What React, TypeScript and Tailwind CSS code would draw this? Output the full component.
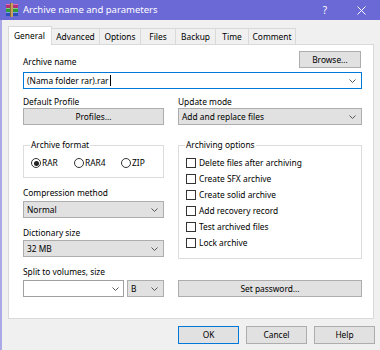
import React from "react";

function Chevron() {
  return (
    <svg width="7" height="4" viewBox="0 0 7 4" className="shrink-0">
      <polyline points="0.5,0.5 3.5,3.5 6.5,0.5" fill="none" stroke="#555" strokeWidth="1" />
    </svg>
  );
}

function Select({ value }: { value: string }) {
  return (
    <div className="h-[17px] w-full border border-[#adadad] bg-[#e1e1e1] flex items-center justify-between pl-[3px] pr-[5px]">
      <span>{value}</span>
      <Chevron />
    </div>
  );
}

function Button({ label, className = "" }: { label: string; className?: string }) {
  return (
    <div className={`h-[17px] border border-[#adadad] bg-[#e1e1e1] flex items-center justify-center ${className}`}>
      {label}
    </div>
  );
}

function Radio({ label, checked, w }: { label: string; checked?: boolean; w: string }) {
  return (
    <div className={`flex items-center gap-[1px] ${w}`}>
      <div className="w-[10px] h-[10px] rounded-full border border-[#333] bg-white flex items-center justify-center">
        {checked && <div className="w-[5px] h-[5px] rounded-full bg-[#222]" />}
      </div>
      <span>{label}</span>
    </div>
  );
}

function Check({ label }: { label: string }) {
  return (
    <div className="flex items-center h-[12px] gap-[3px]">
      <div className="w-[10px] h-[10px] border border-[#333] bg-white" />
      <span>{label}</span>
    </div>
  );
}

const tabs: { name: string; w: string }[] = [
  { name: "General", w: "w-[44px]" },
  { name: "Advanced", w: "w-[48px]" },
  { name: "Options", w: "w-[41px]" },
  { name: "Files", w: "w-[35px]" },
  { name: "Backup", w: "w-[40px]" },
  { name: "Time", w: "w-[33px]" },
  { name: "Comment", w: "w-[47px]" },
];

export default function App() {
  return (
    <div className="w-[380px] h-[350px] bg-[#f0f0f0] overflow-hidden font-['Noto_Sans',sans-serif] text-[8.4px] leading-[12px] text-black">
      {/* Title bar */}
      <div className="h-[20px] bg-[#6b69d6] flex items-center text-white">
        <svg width="14" height="14" viewBox="0 0 14 14" className="ml-[5px]">
          <rect x="1" y="1" width="12" height="4" fill="#b0307a" />
          <rect x="1" y="1" width="12" height="1" fill="#e070b0" />
          <rect x="1" y="5" width="12" height="4" fill="#2f9a3a" />
          <rect x="1" y="5" width="12" height="1" fill="#7fd07f" />
          <rect x="1" y="9" width="12" height="4" fill="#2a4fb8" />
          <rect x="1" y="9" width="12" height="1" fill="#7f9fe8" />
          <rect x="5" y="0" width="3" height="14" fill="#c8a060" />
          <rect x="5" y="0" width="1" height="14" fill="#8a6a30" />
        </svg>
        <span className="ml-[4px] text-[9.5px] leading-[20px]">Archive name and parameters</span>
        <span className="ml-auto text-[10px] leading-[20px]">?</span>
        <svg width="9" height="9" viewBox="0 0 9 9" className="ml-[30px] mr-[14px]">
          <path d="M0.5 0.5 L8.5 8.5 M8.5 0.5 L0.5 8.5" stroke="#fff" strokeWidth="1" />
        </svg>
      </div>

      <div className="h-[330px] border-l-2 border-[#aba8e8] pl-[6px] pt-[6px] flex flex-col">
        {/* Tabs */}
        <div className="flex items-end h-[18px]">
          {tabs.map((t, i) =>
            i === 0 ? (
              <div
                key={t.name}
                className={`${t.w} h-[19px] -mb-px relative z-10 bg-white border border-b-0 border-[#d9d9d9] pl-[5px] flex items-center`}
              >
                {t.name}
              </div>
            ) : (
              <div
                key={t.name}
                className={`${t.w} h-[16px] bg-[#f0f0f0] border-t border-r border-[#d9d9d9] flex items-center justify-center`}
              >
                {t.name}
              </div>
            )
          )}
        </div>

        {/* Panel */}
        <div className="w-[366px] h-[275px] bg-white border border-[#d9d9d9] pl-[14px] pt-[6px]">
          <div className="w-[339px]">
            <div className="flex items-end justify-between h-[17px]">
              <span>Archive name</span>
              <Button label="Browse..." className="w-[62px] mr-[1px]" />
            </div>
            <div className="mt-[4px] h-[17px] border border-[#0078d7] bg-white flex items-center justify-between pl-[3px] pr-[5px]">
              <div className="flex items-center">
                <span>(Nama folder rar).rar</span>
                <span className="w-px h-[11px] bg-black ml-px" />
              </div>
              <Chevron />
            </div>

            <div className="flex gap-[14px]">
              {/* Left column */}
              <div className="w-[141px] flex flex-col">
                <div className="mt-[7px]">Default Profile</div>
                <Button label="Profiles..." className="w-full" />
                <div className="mt-[20px] h-[33px] relative border border-[#dcdcdc] pt-[11px] pl-[7px]">
                  <span className="absolute -top-[7px] left-[6px] bg-white px-px">Archive format</span>
                  <div className="flex h-[12px] items-center">
                    <Radio label="RAR" checked w="w-[43px]" />
                    <Radio label="RAR4" w="w-[47px]" />
                    <Radio label="ZIP" w="w-[30px]" />
                  </div>
                </div>
                <div className="mt-[9px]">Compression method</div>
                <div className="mt-[2px]">
                  <Select value="Normal" />
                </div>
                <div className="mt-[9px]">Dictionary size</div>
                <div className="mt-[1px]">
                  <Select value="32 MB" />
                </div>
                <div className="mt-[9px]">Split to volumes, size</div>
                <div className="mt-[2px] flex gap-[3px]">
                  <div className="w-[101px] h-[17px] border border-[#a0a0a0] bg-white flex items-center justify-end pr-[4px]">
                    <Chevron />
                  </div>
                  <div className="w-[37px]">
                    <Select value="B" />
                  </div>
                </div>
              </div>

              {/* Right column */}
              <div className="w-[184px] flex flex-col">
                <div className="mt-[7px]">Update mode</div>
                <Select value="Add and replace files" />
                <div className="mt-[20px] h-[114px] relative border border-[#dcdcdc] pt-[11px] pl-[7px]">
                  <span className="absolute -top-[7px] left-[6px] bg-white px-px">Archiving options</span>
                  <div className="flex flex-col gap-[4px]">
                    <Check label="Delete files after archiving" />
                    <Check label="Create SFX archive" />
                    <Check label="Create solid archive" />
                    <Check label="Add recovery record" />
                    <Check label="Test archived files" />
                    <Check label="Lock archive" />
                  </div>
                </div>
                <Button label="Set password..." className="mt-[21px] w-full" />
              </div>
            </div>
          </div>
        </div>

        {/* Bottom buttons */}
        <div className="mt-[7px] ml-[170px] flex gap-[7px]">
          <div className="w-[61px] h-[18px] border border-[#0078d7] bg-[#e1e1e1] flex items-center justify-center">OK</div>
          <div className="w-[61px] h-[18px] border border-[#adadad] bg-[#e1e1e1] flex items-center justify-center">Cancel</div>
          <div className="w-[61px] h-[18px] border border-[#adadad] bg-[#e1e1e1] flex items-center justify-center">Help</div>
        </div>
      </div>
    </div>
  );
}
